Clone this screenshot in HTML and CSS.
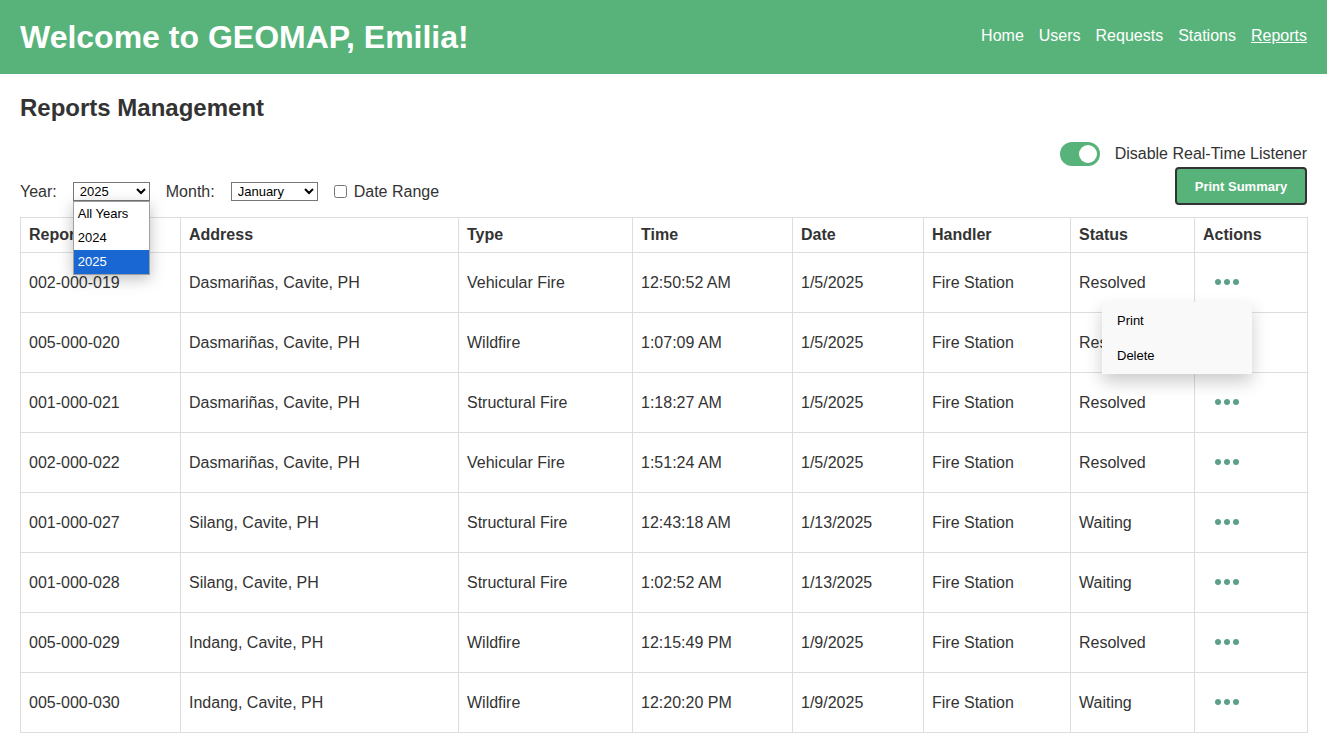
FILE: index.html
```html
<!DOCTYPE html>
<html>
<head>
<meta charset="utf-8">
<title>GEOMAP Reports</title>
<link rel="stylesheet" href="styles.css">
</head>
<body>
<header class="topbar">
  <h1 class="brand">Welcome to GEOMAP, Emilia!</h1>
  <nav class="nav">
    <a href="#">Home</a>
    <a href="#">Users</a>
    <a href="#">Requests</a>
    <a href="#">Stations</a>
    <a href="#" class="active">Reports</a>
  </nav>
</header>
<main class="content">
  <h2 class="page-title">Reports Management</h2>
  <div class="toolbar">
    <div class="filters">
      <label class="flabel">Year:</label>
      <div class="select-wrap">
        <select class="sel sel-year"><option>All Years</option><option>2024</option><option selected>2025</option></select>
        <div class="listbox">
          <div class="opt">All Years</div>
          <div class="opt">2024</div>
          <div class="opt selected">2025</div>
        </div>
      </div>
      <label class="flabel">Month:</label>
      <select class="sel sel-month"><option>January</option></select>
      <label class="check"><input type="checkbox"> <span>Date Range</span></label>
    </div>
    <div class="right-tools">
      <div class="toggle-row">
        <span class="toggle"><span class="knob"></span></span>
        <span class="toggle-label">Disable Real-Time Listener</span>
      </div>
      <button class="print-btn">Print Summary</button>
    </div>
  </div>
  <table class="reports">
    <colgroup>
      <col style="width:160px"><col style="width:278px"><col style="width:174px"><col style="width:160px"><col style="width:131px"><col style="width:147px"><col style="width:124px"><col style="width:113px">
    </colgroup>
    <thead>
      <tr><th>Report ID</th><th>Address</th><th>Type</th><th>Time</th><th>Date</th><th>Handler</th><th>Status</th><th>Actions</th></tr>
    </thead>
    <tbody>
      <tr><td>002-000-019</td><td>Dasmariñas, Cavite, PH</td><td>Vehicular Fire</td><td>12:50:52 AM</td><td>1/5/2025</td><td>Fire Station</td><td>Resolved</td><td class="act"><span class="dots"><i></i><i></i><i></i></span>
        <div class="menu"><div class="mi">Print</div><div class="mi">Delete</div></div></td></tr>
      <tr><td>005-000-020</td><td>Dasmariñas, Cavite, PH</td><td>Wildfire</td><td>1:07:09 AM</td><td>1/5/2025</td><td>Fire Station</td><td>Resolved</td><td class="act"><span class="dots"><i></i><i></i><i></i></span></td></tr>
      <tr><td>001-000-021</td><td>Dasmariñas, Cavite, PH</td><td>Structural Fire</td><td>1:18:27 AM</td><td>1/5/2025</td><td>Fire Station</td><td>Resolved</td><td class="act"><span class="dots"><i></i><i></i><i></i></span></td></tr>
      <tr><td>002-000-022</td><td>Dasmariñas, Cavite, PH</td><td>Vehicular Fire</td><td>1:51:24 AM</td><td>1/5/2025</td><td>Fire Station</td><td>Resolved</td><td class="act"><span class="dots"><i></i><i></i><i></i></span></td></tr>
      <tr><td>001-000-027</td><td>Silang, Cavite, PH</td><td>Structural Fire</td><td>12:43:18 AM</td><td>1/13/2025</td><td>Fire Station</td><td>Waiting</td><td class="act"><span class="dots"><i></i><i></i><i></i></span></td></tr>
      <tr><td>001-000-028</td><td>Silang, Cavite, PH</td><td>Structural Fire</td><td>1:02:52 AM</td><td>1/13/2025</td><td>Fire Station</td><td>Waiting</td><td class="act"><span class="dots"><i></i><i></i><i></i></span></td></tr>
      <tr><td>005-000-029</td><td>Indang, Cavite, PH</td><td>Wildfire</td><td>12:15:49 PM</td><td>1/9/2025</td><td>Fire Station</td><td>Resolved</td><td class="act"><span class="dots"><i></i><i></i><i></i></span></td></tr>
      <tr><td>005-000-030</td><td>Indang, Cavite, PH</td><td>Wildfire</td><td>12:20:20 PM</td><td>1/9/2025</td><td>Fire Station</td><td>Waiting</td><td class="act"><span class="dots"><i></i><i></i><i></i></span></td></tr>
    </tbody>
  </table>
</main>
</body>
</html>
```
FILE: styles.css
```css
* { box-sizing: border-box; }
html, body { margin: 0; padding: 0; }
body {
  font-family: "Liberation Sans", Arial, sans-serif;
  color: #333;
  background: #fff;
  overflow: hidden;
}
.topbar {
  height: 74px;
  background: #58b37a;
  display: flex;
  align-items: center;
  justify-content: space-between;
  padding: 0 20px;
}
.brand {
  margin: 0;
  font-size: 32px;
  font-weight: bold;
  color: #fff;
  line-height: 1;
}
.nav { display: flex; gap: 15px; margin-bottom: 2px; }
.nav a {
  color: #fff;
  text-decoration: none;
  font-size: 16px;
}
.nav a.active { text-decoration: underline; }
.content { padding: 0 20px; }
.page-title {
  margin: 20px 0 0;
  font-size: 24px;
  line-height: 28px;
  font-weight: bold;
  color: #333;
}
.toolbar {
  margin-top: 20px;
  display: flex;
  justify-content: space-between;
  align-items: flex-end;
}
.filters {
  display: flex;
  align-items: center;
  margin-bottom: 4px;
  font-size: 16px;
}
.flabel { margin-right: 16px; line-height: 19px; }
.select-wrap { position: relative; margin-right: 16px; }
.sel {
  font-family: "Liberation Sans", Arial, sans-serif;
  font-size: 13px;
  height: 19px;
  border: 1px solid #767676;
  border-radius: 0;
  background: #fff;
  color: #000;
  padding: 0 0 0 2px;
  display: block;
}
.sel-year { width: 77px; }
.sel-month { width: 87px; margin-right: 16px; }
.listbox {
  position: absolute;
  top: 19px;
  left: 0;
  width: 77px;
  background: #fff;
  border: 1px solid #a0a0a0;
  box-shadow: 0 4px 14px rgba(0,0,0,0.25);
  z-index: 10;
}
.opt {
  height: 24px;
  line-height: 24px;
  font-size: 13px;
  color: #000;
  padding-left: 4px;
}
.opt.selected { background: #1967d2; color: #fff; }
.check { display: flex; align-items: center; }
.check input { margin: 0 7px 0 0; width: 13px; height: 13px; }
.right-tools {
  display: flex;
  flex-direction: column;
  align-items: flex-end;
  gap: 1px;
}
.toggle-row { display: flex; align-items: center; }
.toggle {
  width: 40px;
  height: 24px;
  border-radius: 12px;
  background: #58b37a;
  position: relative;
  display: inline-block;
}
.knob {
  position: absolute;
  width: 18px;
  height: 18px;
  border-radius: 50%;
  background: #fff;
  top: 3px;
  right: 3px;
}
.toggle-label { margin-left: 15px; font-size: 16px; }
.print-btn {
  width: 132px;
  height: 38px;
  background: #58b37a;
  color: #fff;
  border: 2px solid #333;
  border-radius: 4px;
  font-family: "Liberation Sans", Arial, sans-serif;
  font-size: 13px;
  font-weight: bold;
}
.reports {
  margin-top: 12px;
  width: 1287px;
  border-collapse: collapse;
  table-layout: fixed;
  font-size: 16px;
}
.reports th, .reports td {
  border: 1px solid #ddd;
  padding: 8px;
  text-align: left;
  color: #333;
  line-height: 18px;
}
.reports th { font-weight: bold; }
.reports td { height: 60px; }
.act { position: relative; }
.dots { display: inline-flex; gap: 3px; margin-left: 12px; vertical-align: middle; position: relative; top: -1px; }
.dots i {
  width: 6px;
  height: 6px;
  border-radius: 50%;
  background: #5e9f8a;
  display: block;
}
.menu {
  position: absolute;
  top: 49px;
  left: -93px;
  width: 150px;
  background: #f9f9f9;
  box-shadow: 0 8px 16px rgba(0,0,0,0.2);
  z-index: 5;
  padding: 1px 0;
}
.mi {
  font-size: 13px;
  color: #000;
  padding: 10px 15px;
  line-height: 15px;
}
```
